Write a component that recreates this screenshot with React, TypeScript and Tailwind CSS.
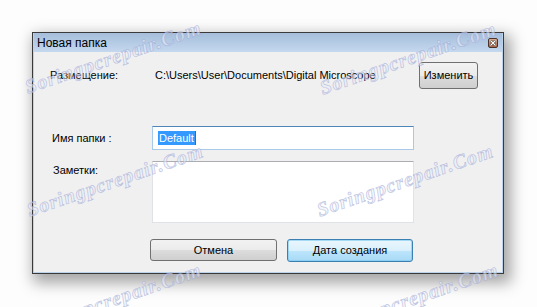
import React from "react";

const font = { fontFamily: '"Liberation Sans", Arial, sans-serif' };

function Watermark({ cls }: { cls: string }) {
  return (
    <span
      className={`pointer-events-none absolute whitespace-nowrap italic font-bold text-[20px] leading-none tracking-[1px] text-[rgba(235,238,248,0.55)] [-webkit-text-stroke:0.7px_rgba(150,162,210,0.6)] -translate-x-1/2 -translate-y-1/2 rotate-[-19deg] ${cls}`}
      style={{ fontFamily: '"Liberation Serif", serif' }}
    >
      Soringpcrepair.Com
    </span>
  );
}

export default function App() {
  return (
    <div
      className="relative w-[537px] h-[307px] overflow-hidden bg-[#fdfdfd] text-black"
      style={font}
    >
      <div className="ml-[32px] mt-[32px] w-[472px] h-[242px] border border-[#3a3a3a] bg-[#bcd3eb] px-px pb-px flex flex-col shadow-[4px_6px_14px_3px_rgba(0,0,0,0.35)]">
        {/* title bar */}
        <div className="h-[19px] flex items-center justify-between bg-gradient-to-b from-[#a6bedb] to-[#c4d8ee] pl-[3px] pr-[4px]">
          <span className="text-[12px] leading-none">Новая папка</span>
          <div className="w-[10px] h-[10px] rounded-[2px] border border-[#4a3328] bg-gradient-to-b from-[#d9ab94] to-[#a9644b] flex items-center justify-center">
            <svg width="6" height="6" viewBox="0 0 6 6">
              <path d="M0.5 0.5 L5.5 5.5 M5.5 0.5 L0.5 5.5" stroke="#3a2a20" strokeWidth="2.4" />
              <path d="M0.5 0.5 L5.5 5.5 M5.5 0.5 L0.5 5.5" stroke="#ffffff" strokeWidth="1.2" />
            </svg>
          </div>
        </div>
        {/* body */}
        <div className="flex-1 bg-[#f0f0f0] flex flex-col text-[11px]">
          {/* row 1 */}
          <div className="mt-[10px] flex items-center h-[27px] pl-[16px] pr-[24px]">
            <span className="w-[105px]">Размещение:</span>
            <span className="flex-1">C:\Users\User\Documents\Digital Microscope</span>
            <button className="w-[59px] h-[27px] rounded-[3px] border border-[#707070] bg-[linear-gradient(to_bottom,#f2f2f2_0%,#ebebeb_50%,#dddddd_50%,#cfcfcf_100%)] text-[11px]">
              Изменить
            </button>
          </div>
          {/* row 2 */}
          <div className="mt-[37px] flex items-center h-[24px] pl-[18px]">
            <span className="w-[100px]">Имя папки :</span>
            <div className="w-[262px] h-[24px] bg-white border border-[#a9c9e8] border-t-[#4f87bb] flex items-center pl-[5px]">
              <span className="bg-[#3399ff] text-white leading-[14px] px-px">Default</span>
              <span className="w-px h-[14px] bg-[#a0521c]" />
            </div>
          </div>
          {/* row 3 */}
          <div className="mt-[11px] flex items-start h-[62px] pl-[19px]">
            <span className="w-[99px] mt-[1px]">Заметки:</span>
            <div className="w-[262px] h-[62px] bg-white border border-[#dfe3e8] border-t-[#abadb3]" />
          </div>
          {/* buttons */}
          <div className="mt-[16px] flex pl-[116px] gap-[10px]">
            <button className="w-[127px] h-[22px] rounded-[3px] border border-[#707070] bg-[linear-gradient(to_bottom,#f2f2f2_0%,#ebebeb_50%,#dddddd_50%,#cfcfcf_100%)] text-[11px]">
              Отмена
            </button>
            <button className="w-[126px] h-[23px] rounded-[3px] border border-[#3c7fb1] bg-[linear-gradient(to_bottom,#eaf6fd_0%,#d9f0fc_50%,#bee6fd_50%,#a7d9f5_100%)] text-[11px] shadow-[inset_0_0_0_1px_rgba(120,200,240,0.6)]">
              Дата создания
            </button>
          </div>
        </div>
      </div>

      <Watermark cls="left-[113px] top-[57px]" />
      <Watermark cls="left-[408px] top-[58px]" />
      <Watermark cls="left-[115px] top-[180px]" />
      <Watermark cls="left-[405px] top-[180px]" />
      <Watermark cls="left-[113px] top-[299px]" />
      <Watermark cls="left-[410px] top-[299px]" />
    </div>
  );
}
